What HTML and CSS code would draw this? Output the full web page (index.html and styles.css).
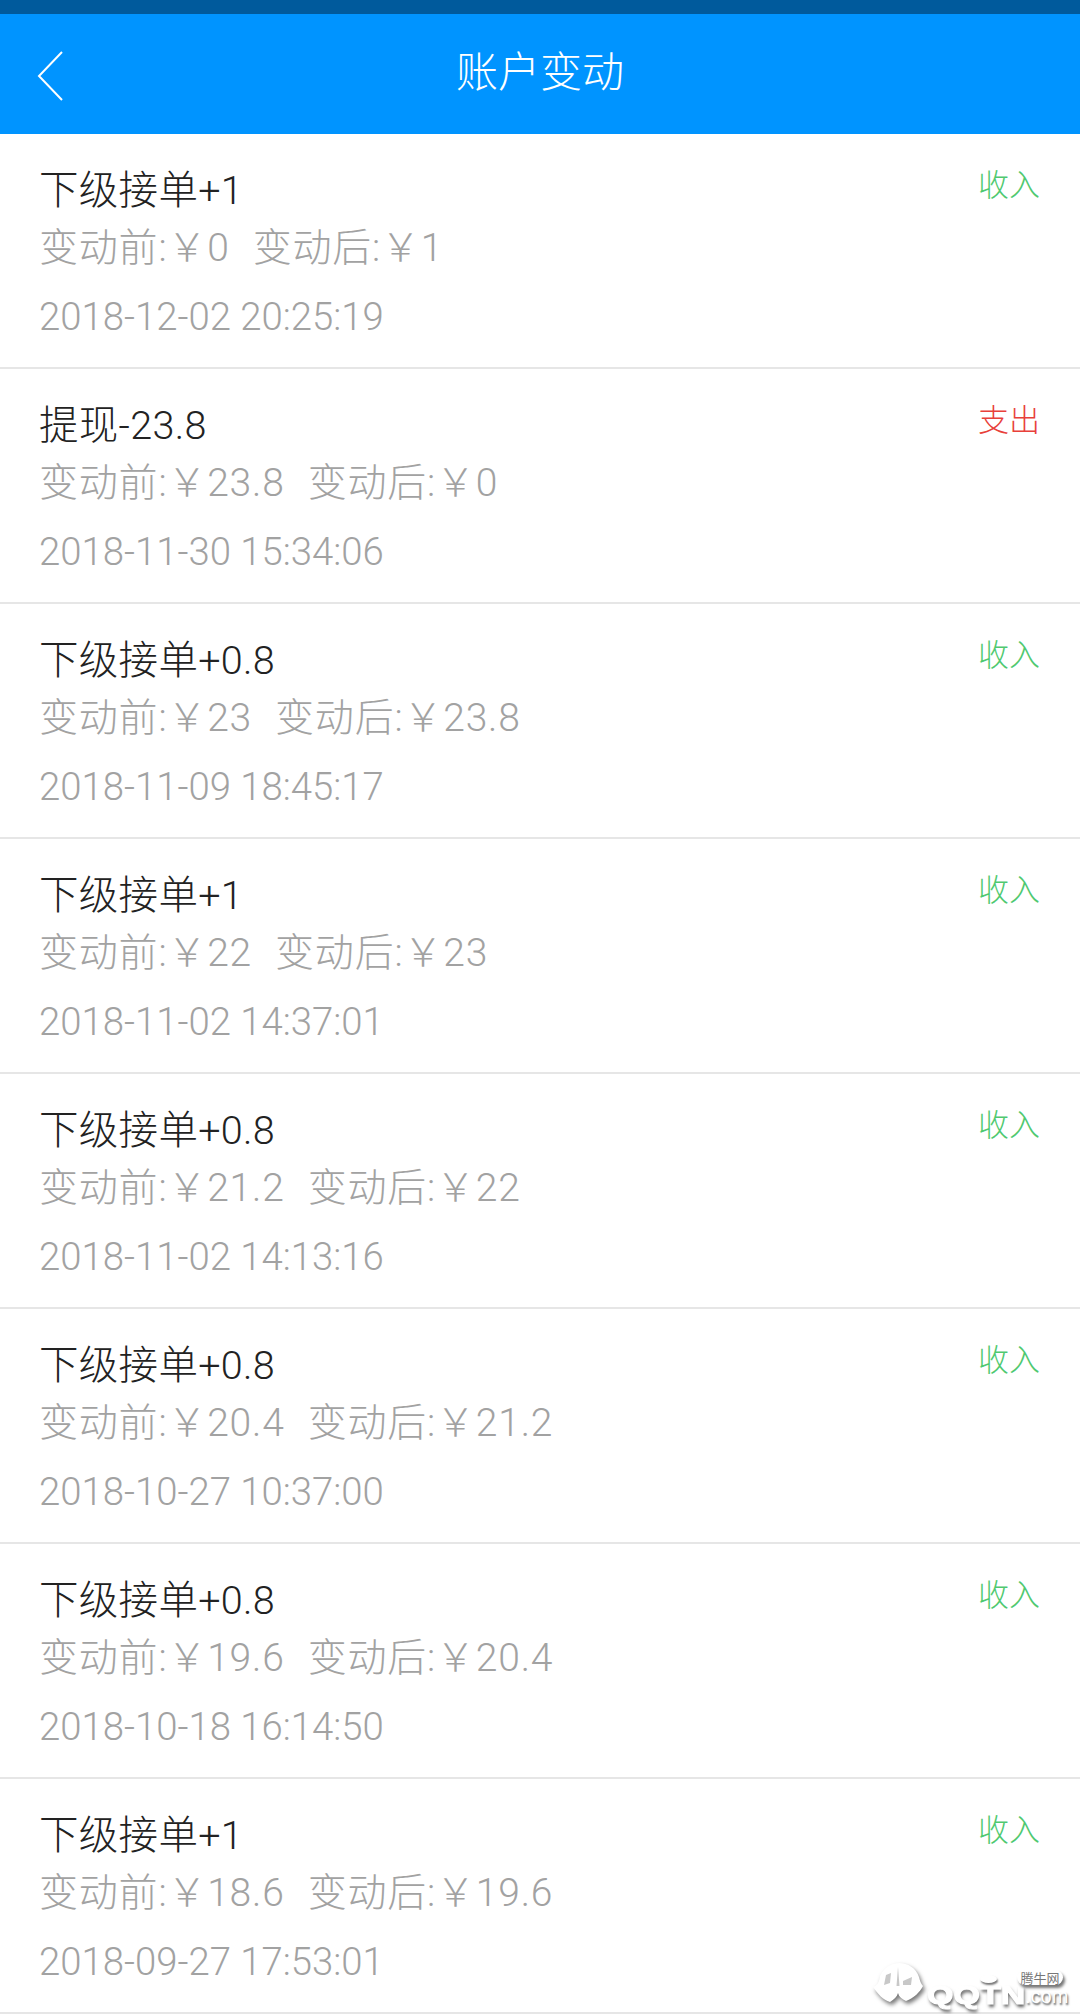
FILE: index.html
```html
<!DOCTYPE html>
<html lang="zh-CN">
<head>
<meta charset="utf-8">
<title>账户变动</title>
<link rel="stylesheet" href="styles.css">
</head>
<body>
<div class="status"></div>
<header class="nav">
  <svg class="back" width="30" height="52" viewBox="0 0 30 52"><path d="M26 2 L3 26 L26 50" fill="none" stroke="#fff" stroke-width="2"/></svg>
  <h1 class="nav-title">账户变动</h1>
</header>
<main class="list">
  <article class="row"><div class="info"><div class="title">下级接单+1</div><div class="change"><span>变动前:&#xFFE5;0</span><span>变动后:&#xFFE5;1</span></div><div class="time">2018-12-02 20:25:19</div></div><div class="tag in">收入</div></article>
  <article class="row"><div class="info"><div class="title">提现-23.8</div><div class="change"><span>变动前:&#xFFE5;23.8</span><span>变动后:&#xFFE5;0</span></div><div class="time">2018-11-30 15:34:06</div></div><div class="tag out">支出</div></article>
  <article class="row"><div class="info"><div class="title">下级接单+0.8</div><div class="change"><span>变动前:&#xFFE5;23</span><span>变动后:&#xFFE5;23.8</span></div><div class="time">2018-11-09 18:45:17</div></div><div class="tag in">收入</div></article>
  <article class="row"><div class="info"><div class="title">下级接单+1</div><div class="change"><span>变动前:&#xFFE5;22</span><span>变动后:&#xFFE5;23</span></div><div class="time">2018-11-02 14:37:01</div></div><div class="tag in">收入</div></article>
  <article class="row"><div class="info"><div class="title">下级接单+0.8</div><div class="change"><span>变动前:&#xFFE5;21.2</span><span>变动后:&#xFFE5;22</span></div><div class="time">2018-11-02 14:13:16</div></div><div class="tag in">收入</div></article>
  <article class="row"><div class="info"><div class="title">下级接单+0.8</div><div class="change"><span>变动前:&#xFFE5;20.4</span><span>变动后:&#xFFE5;21.2</span></div><div class="time">2018-10-27 10:37:00</div></div><div class="tag in">收入</div></article>
  <article class="row"><div class="info"><div class="title">下级接单+0.8</div><div class="change"><span>变动前:&#xFFE5;19.6</span><span>变动后:&#xFFE5;20.4</span></div><div class="time">2018-10-18 16:14:50</div></div><div class="tag in">收入</div></article>
  <article class="row"><div class="info"><div class="title">下级接单+1</div><div class="change"><span>变动前:&#xFFE5;18.6</span><span>变动后:&#xFFE5;19.6</span></div><div class="time">2018-09-27 17:53:01</div></div><div class="tag in">收入</div></article>
</main>
<div class="mark">
  <svg class="mark-logo" width="52" height="42" viewBox="0 0 52 42"><path d="M1 25C6 23 7 20 8 14 12 5 20 1 27 1c9 0 17 5 20 14 1 4 2 7 4 9-3 6-9 12-17 15-4-2-7-4-8-8-1 4-4 6-8 9C11 38 6 32 1 25Z" fill="#fff"/><path d="M26 5l1.5 19h-3zM14 13l5-2-1 10-6 2zM40 15l-9 4v4h8z" fill="#c8c8c8"/></svg>
  <span class="mark-name">QQTN</span><span class="mark-com">.com</span>
  <span class="mark-ring"></span>
  <span class="mark-badge">腾牛网</span>
</div>
</body>
</html>
```
FILE: styles.css
```css
* { box-sizing: border-box; }
html, body { margin: 0; padding: 0; }
body {
  width: 1080px;
  height: 2014px;
  overflow: hidden;
  background: #fff;
  font-family: Roboto, "Noto Sans CJK SC", sans-serif;
  font-weight: 300;
  position: relative;
}
.status { height: 14px; background: #005a9c; }
.nav {
  height: 120px;
  padding-bottom: 12px;
  background: #0094ff;
  display: flex;
  align-items: center;
  justify-content: center;
  position: relative;
}
.back { position: absolute; left: 36px; top: 36px; }
.nav-title { margin: 0; font-size: 42px; font-weight: 300; color: #fff; }
.row {
  height: 235px;
  border-bottom: 2px solid #e6e6e6;
  padding: 0 40px 0 39px;
  display: flex;
  justify-content: space-between;
  align-items: flex-start;
}
.info { display: flex; flex-direction: column; }
.title { margin-top: 30px; font-size: 39.5px; line-height: 54px; letter-spacing: 0.3px; color: #222; }
.change { margin-top: 4px; font-size: 39px; line-height: 52px; letter-spacing: 0.8px; color: #a2a2a2; display: flex; gap: 23px; }
.time { margin-top: 18px; font-size: 38.3px; line-height: 50px; color: #a2a2a2; }
.tag { margin-top: 32px; font-size: 31px; line-height: 40px; }
.in { color: #4fc970; }
.out { color: #e8403a; }
.mark {
  position: absolute;
  left: 872px;
  top: 1962px;
  width: 200px;
  height: 46px;
  color: #fff;
}
.mark-logo { position: absolute; left: 0; top: 0; filter: drop-shadow(2px 3px 2px #777); }
.mark-name {
  position: absolute;
  left: 55px;
  top: 19px;
  font-family: "Liberation Sans", sans-serif;
  font-size: 25px;
  line-height: 28px;
  font-weight: 700;
  -webkit-text-stroke: 1px #fff;
  transform: scaleX(1.36);
  transform-origin: left center;
  text-shadow: 1px 3px 3px #555;
}
.mark-com {
  position: absolute;
  left: 153px;
  top: 22px;
  font-family: "Liberation Sans", sans-serif;
  font-size: 20px;
  line-height: 24px;
  font-weight: 400;
  text-shadow: 1px 2px 2px #555;
}
.mark-ring {
  position: absolute;
  left: 108px;
  top: 13px;
  width: 17px;
  height: 8px;
  border-radius: 50%;
  background: #fff;
  box-shadow: 1px 2px 2px #777;
}
.mark-badge {
  position: absolute;
  left: 145px;
  top: 8px;
  width: 46px;
  text-align: center;
  font-family: "Noto Sans CJK SC", sans-serif;
  font-size: 13px;
  line-height: 15px;
  font-weight: 400;
  color: #777;
  background: #fff;
  border-radius: 8px;
  box-shadow: 2px 3px 3px #777;
}
```
